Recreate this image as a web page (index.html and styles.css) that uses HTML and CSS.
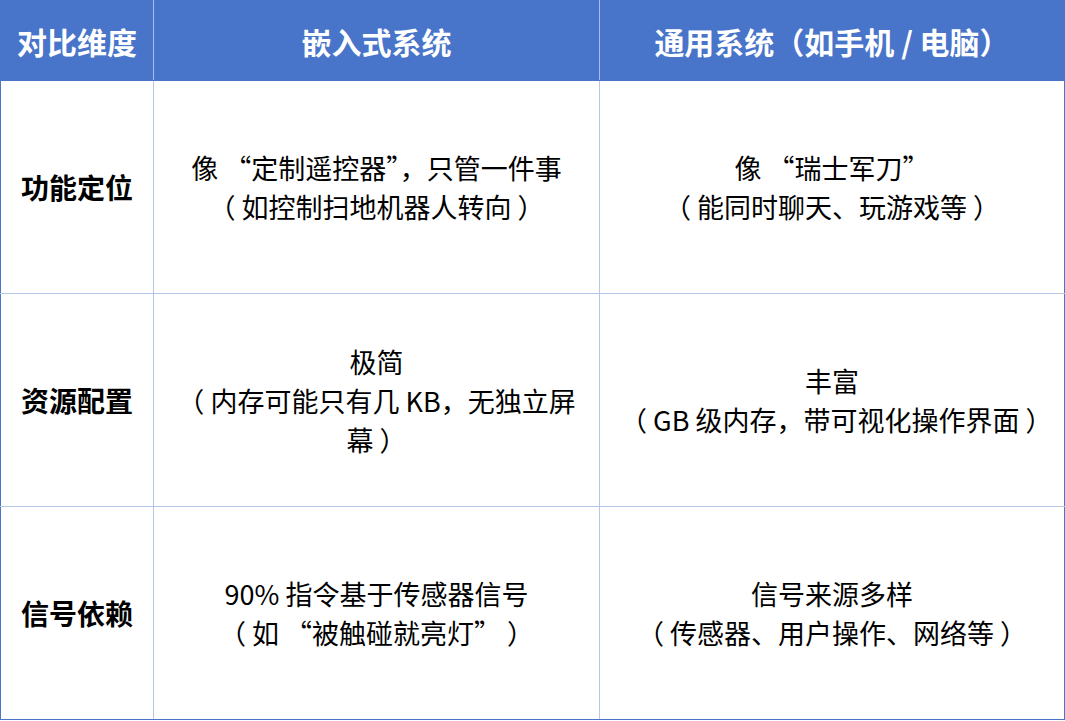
FILE: index.html
```html
<!DOCTYPE html>
<html lang="zh-CN">
<head>
<meta charset="utf-8">
<title>嵌入式系统 vs 通用系统</title>
<link rel="stylesheet" href="styles.css">
</head>
<body>
<table class="cmp">
  <colgroup>
    <col class="c1">
    <col class="c2">
    <col class="c3">
  </colgroup>
  <thead>
    <tr>
      <th>对比维度</th>
      <th>嵌入式系统</th>
      <th>通用系统（如手机 / 电脑）</th>
    </tr>
  </thead>
  <tbody>
    <tr>
      <td class="label">功能定位</td>
      <td>像 “定制遥控器”，只管一件事<br>（ 如控制扫地机器人转向 ）</td>
      <td>像 “瑞士军刀”<br>（ 能同时聊天、玩游戏等 ）</td>
    </tr>
    <tr>
      <td class="label">资源配置</td>
      <td>极简<br>（ 内存可能只有几 KB，无独立屏幕 ）</td>
      <td>丰富<br>（ GB 级内存，带可视化操作界面 ）</td>
    </tr>
    <tr>
      <td class="label">信号依赖</td>
      <td>90% 指令基于传感器信号<br>（ 如 “被触碰就亮灯” ）</td>
      <td>信号来源多样<br>（ 传感器、用户操作、网络等 ）</td>
    </tr>
  </tbody>
</table>
</body>
</html>
```

FILE: styles.css
```css
html, body {
  margin: 0;
  padding: 0;
  background: #ffffff;
}

body {
  font-family: "Noto Sans CJK SC", "Noto Sans", sans-serif;
  color: #000000;
}

.cmp {
  width: 1064px;
  border-collapse: collapse;
  table-layout: fixed;
  border: 1px solid #4a74c9;
}

.cmp .c1 { width: 153px; }
.cmp .c2 { width: 446px; }
.cmp .c3 { width: 465px; }

.cmp th {
  height: 79px;
  padding: 0;
  background: #4874c9;
  color: #ffffff;
  font-size: 30px;
  font-weight: 700;
  text-align: center;
  vertical-align: middle;
  border-left: 1px solid #a9bde8;
  border-right: 1px solid #a9bde8;
  border-top: 1px solid #4a74c9;
  border-bottom: 1px solid #4a74c9;
}

.cmp th:first-child { border-left-color: #4a74c9; }
.cmp th:last-child { border-right-color: #4a74c9; }

.cmp td {
  height: 212px;
  padding: 0 20px;
  font-size: 27px;
  line-height: 39px;
  text-align: center;
  vertical-align: middle;
  border: 1px solid #b6c5e8;
}

.cmp td:first-child { border-left-color: #4a74c9; }
.cmp td:last-child { border-right-color: #4a74c9; }
.cmp tbody tr:last-child td { border-bottom-color: #4a74c9; }

.cmp td.label {
  padding: 0 4px;
  font-weight: 700;
  font-size: 28px;
}
```
